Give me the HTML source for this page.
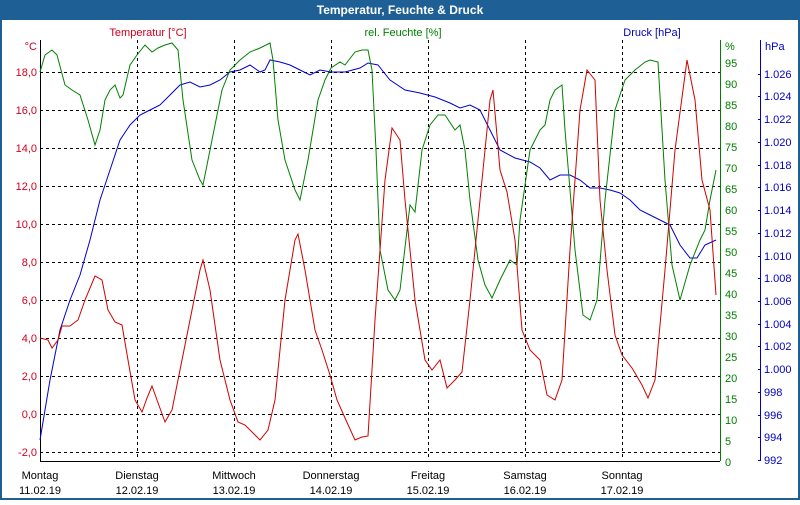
<!DOCTYPE html>
<html><head><style>
body{margin:0;width:800px;height:500px;overflow:hidden;background:#fff;font-family:"Liberation Sans",sans-serif}
</style></head><body>
<svg width="800" height="500" xmlns="http://www.w3.org/2000/svg" font-family="Liberation Sans, sans-serif" font-size="11">
<rect x="0" y="0" width="800" height="500" fill="#1e5f96"/>
<rect x="2" y="20" width="796" height="478" fill="#fff"/>
<text x="400" y="14" fill="#fff" font-weight="bold" font-size="12" text-anchor="middle">Temperatur, Feuchte &amp; Druck</text>
<text x="148" y="36" fill="#d00020" text-anchor="middle">Temperatur [°C]</text>
<text x="403" y="36" fill="#008000" text-anchor="middle">rel. Feuchte [%]</text>
<text x="652" y="36" fill="#0000c0" text-anchor="middle">Druck [hPa]</text>
<g stroke="#000" stroke-dasharray="3,3" stroke-width="1">
<line x1="40" x2="720" y1="72.5" y2="72.5"/><line x1="40" x2="720" y1="110.5" y2="110.5"/><line x1="40" x2="720" y1="148.5" y2="148.5"/><line x1="40" x2="720" y1="186.5" y2="186.5"/><line x1="40" x2="720" y1="224.5" y2="224.5"/><line x1="40" x2="720" y1="262.5" y2="262.5"/><line x1="40" x2="720" y1="300.5" y2="300.5"/><line x1="40" x2="720" y1="338.5" y2="338.5"/><line x1="40" x2="720" y1="376.5" y2="376.5"/><line x1="40" x2="720" y1="414.5" y2="414.5"/><line x1="40" x2="720" y1="452.5" y2="452.5"/>
<line y1="40" y2="460" x1="137.5" x2="137.5"/><line y1="40" y2="460" x1="234.5" x2="234.5"/><line y1="40" y2="460" x1="331.5" x2="331.5"/><line y1="40" y2="460" x1="428.5" x2="428.5"/><line y1="40" y2="460" x1="525.5" x2="525.5"/><line y1="40" y2="460" x1="622.5" x2="622.5"/>
</g>
<line x1="40.5" y1="40" x2="40.5" y2="461" stroke="#000"/>
<line x1="40" y1="461.5" x2="720" y2="461.5" stroke="#000"/>
<line x1="720.5" y1="40" x2="720.5" y2="461" stroke="#008000"/>
<line x1="760.5" y1="40" x2="760.5" y2="461" stroke="#0000c0"/>
<g fill="#d00020" text-anchor="end">
<text x="37" y="50">°C</text>
<text x="37" y="76">18,0</text><text x="37" y="114">16,0</text><text x="37" y="152">14,0</text><text x="37" y="190">12,0</text><text x="37" y="228">10,0</text><text x="37" y="266">8,0</text><text x="37" y="304">6,0</text><text x="37" y="342">4,0</text><text x="37" y="380">2,0</text><text x="37" y="418">0,0</text><text x="37" y="456">-2,0</text>
</g>
<g fill="#008000">
<text x="725" y="50">%</text>
<text x="725" y="466">0</text><text x="725" y="445">5</text><text x="725" y="424">10</text><text x="725" y="403">15</text><text x="725" y="382">20</text><text x="725" y="361">25</text><text x="725" y="340">30</text><text x="725" y="319">35</text><text x="725" y="298">40</text><text x="725" y="277">45</text><text x="725" y="256">50</text><text x="725" y="235">55</text><text x="725" y="214">60</text><text x="725" y="193">65</text><text x="725" y="172">70</text><text x="725" y="151">75</text><text x="725" y="130">80</text><text x="725" y="109">85</text><text x="725" y="88">90</text><text x="725" y="67">95</text>
</g>
<g fill="#0000c0">
<text x="765" y="50">hPa</text>
<text x="764" y="464">992</text><text x="764" y="441">994</text><text x="764" y="419">996</text><text x="764" y="396">998</text><text x="764" y="373">1.000</text><text x="764" y="350">1.002</text><text x="764" y="328">1.004</text><text x="764" y="305">1.006</text><text x="764" y="282">1.008</text><text x="764" y="260">1.010</text><text x="764" y="237">1.012</text><text x="764" y="214">1.014</text><text x="764" y="191">1.016</text><text x="764" y="169">1.018</text><text x="764" y="146">1.020</text><text x="764" y="123">1.022</text><text x="764" y="100">1.024</text><text x="764" y="78">1.026</text>
</g>
<g stroke="#0000c0"><line x1="758" x2="761" y1="460.5" y2="460.5"/><line x1="758" x2="761" y1="437.5" y2="437.5"/><line x1="758" x2="761" y1="415.5" y2="415.5"/><line x1="758" x2="761" y1="392.5" y2="392.5"/><line x1="758" x2="761" y1="369.5" y2="369.5"/><line x1="758" x2="761" y1="346.5" y2="346.5"/><line x1="758" x2="761" y1="324.5" y2="324.5"/><line x1="758" x2="761" y1="301.5" y2="301.5"/><line x1="758" x2="761" y1="278.5" y2="278.5"/><line x1="758" x2="761" y1="256.5" y2="256.5"/><line x1="758" x2="761" y1="233.5" y2="233.5"/><line x1="758" x2="761" y1="210.5" y2="210.5"/><line x1="758" x2="761" y1="187.5" y2="187.5"/><line x1="758" x2="761" y1="165.5" y2="165.5"/><line x1="758" x2="761" y1="142.5" y2="142.5"/><line x1="758" x2="761" y1="119.5" y2="119.5"/><line x1="758" x2="761" y1="96.5" y2="96.5"/><line x1="758" x2="761" y1="74.5" y2="74.5"/></g>
<g fill="#000" text-anchor="middle">
<text x="40" y="479">Montag</text><text x="40" y="494">11.02.19</text>
<text x="137" y="479">Dienstag</text><text x="137" y="494">12.02.19</text>
<text x="234" y="479">Mittwoch</text><text x="234" y="494">13.02.19</text>
<text x="331" y="479">Donnerstag</text><text x="331" y="494">14.02.19</text>
<text x="428" y="479">Freitag</text><text x="428" y="494">15.02.19</text>
<text x="525" y="479">Samstag</text><text x="525" y="494">16.02.19</text>
<text x="622" y="479">Sonntag</text><text x="622" y="494">17.02.19</text>
</g>
<polyline fill="none" stroke="#0000d0" points="40,440 50,380 60,330 70,300 80,275 90,240 100,200 110,170 120,140 130,125 140,115 150,110 160,105 170,95 180,85 190,82 200,87 210,85 220,80 230,72 240,70 250,65 260,72 265,70 270,60 280,62 290,65 300,70 310,75 320,70 331,72 345,72 360,68 368,63 378,65 390,80 405,90 420,93 435,97 450,103 460,108 470,105 480,110 490,130 500,150 515,158 530,162 540,168 550,180 560,175 570,175 580,180 590,188 600,188 610,190 620,193 630,200 640,210 650,215 660,220 670,225 680,245 690,258 697,258 705,245 716,240"/>
<polyline fill="none" stroke="#008000" points="40,72 45,55 52,50 57,55 65,85 72,90 80,95 88,120 95,145 100,130 105,100 110,90 115,85 120,98 123,95 130,65 137,55 145,45 152,52 158,48 165,45 172,43 178,50 183,100 192,160 200,180 203,185 210,150 215,125 222,90 230,70 240,60 250,52 260,48 270,43 273,60 278,120 285,160 295,190 300,200 308,160 318,100 325,80 331,68 340,62 345,65 355,52 362,50 368,50 372,70 376,150 380,250 388,290 395,300 400,290 410,205 415,212 422,150 430,125 438,115 445,115 455,130 460,125 465,150 470,200 478,260 485,285 492,298 500,280 510,260 517,265 520,220 530,150 540,130 545,125 550,100 555,90 562,85 565,130 575,250 583,315 590,320 597,300 605,200 615,110 625,80 635,70 645,62 650,60 658,62 665,180 672,265 680,300 690,265 700,240 705,230 710,200 716,170"/>
<polyline fill="none" stroke="#d00000" points="40,338 48,340 52,348 58,340 62,326 70,326 78,320 85,300 95,276 102,280 108,310 115,322 122,325 128,360 135,400 142,412 147,398 152,386 157,400 165,422 172,410 180,370 190,320 200,270 203,260 210,290 220,360 230,400 238,422 245,425 252,432 260,440 268,430 275,400 285,300 295,240 298,234 305,270 315,330 322,350 330,375 337,400 345,418 355,440 362,437 368,436 375,320 385,180 392,128 400,140 405,200 415,300 425,360 432,370 440,360 447,388 455,380 462,372 470,300 480,200 490,100 493,90 500,170 507,192 515,240 522,330 530,350 540,360 547,395 555,400 562,380 570,250 580,110 587,70 595,80 600,200 607,270 615,335 622,355 632,368 642,385 648,398 655,380 665,270 675,150 687,60 695,100 702,180 710,210 716,295"/>
</svg>
</body></html>
